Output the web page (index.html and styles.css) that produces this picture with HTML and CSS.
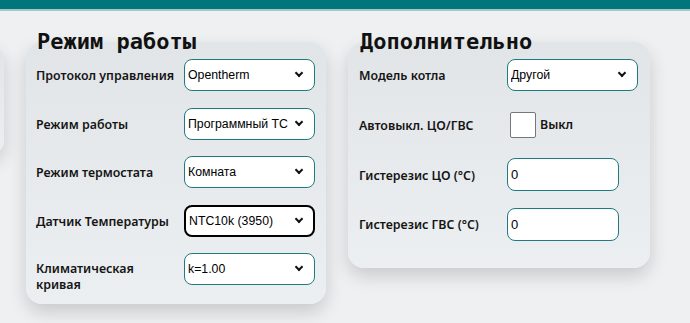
FILE: index.html
```html
<!DOCTYPE html>
<html lang="ru">
<head>
    <meta charset="UTF-8">
    <meta name="viewport" content="width=device-width, initial-scale=1.0">
    <title>Настройки</title>
    <link rel="stylesheet" href="styles.css">
</head>
<body>
    <div class="topbar"></div>

    <div class="columns">
        <!-- колонка слева, почти за краем экрана -->
        <div class="column column-prev">
            <div class="card card-prev"></div>
        </div>

        <div class="column column-main">
            <div class="card">
                <h2 class="card-title">Режим работы</h2>
                <div class="rows">
                    <label class="row-label">Протокол управления</label>
                    <span class="select-wrap">
                        <select>
                            <option>Opentherm</option>
                        </select>
                    </span>

                    <label class="row-label">Режим работы</label>
                    <span class="select-wrap">
                        <select>
                            <option>Программный ТС</option>
                        </select>
                    </span>

                    <label class="row-label">Режим термостата</label>
                    <span class="select-wrap">
                        <select>
                            <option>Комната</option>
                        </select>
                    </span>

                    <label class="row-label">Датчик Температуры</label>
                    <span class="select-wrap">
                        <select class="focused">
                            <option>NTC10k (3950)</option>
                        </select>
                    </span>

                    <label class="row-label two-line">Климатическая<br>кривая</label>
                    <span class="select-wrap">
                        <select>
                            <option>k=1.00</option>
                        </select>
                    </span>
                </div>
            </div>
        </div>

        <div class="column column-extra">
            <div class="card card-extra">
                <h2 class="card-title">Дополнительно</h2>
                <div class="rows">
                    <label class="row-label">Модель котла</label>
                    <span class="select-wrap">
                        <select>
                            <option>Другой</option>
                        </select>
                    </span>

                    <label class="row-label">Автовыкл. ЦО/ГВС</label>
                    <span class="check">
                        <span class="check-box"></span>
                        <span class="check-text">Выкл</span>
                    </span>

                    <label class="row-label">Гистерезис ЦО (°C)</label>
                    <input class="num" type="text" value="0">

                    <label class="row-label">Гистерезис ГВС (°C)</label>
                    <input class="num" type="text" value="0">
                </div>
            </div>
        </div>
    </div>
</body>
</html>
```

FILE: styles.css
```css
body, html {
    margin: 0;
    height: 100%;
    background-color: #eef0f2;
    font-family: "Noto Sans", Arial, sans-serif;
    overflow: hidden;
}

/* Полоса сверху */
.topbar {
    height: 9px;
    background-color: #00767c;
    border-bottom: 2px solid #9fc9cb;
}

.columns {
    display: flex;
    align-items: flex-start;
    gap: 22px;
    margin-left: -96px;
    padding-top: 31px;
}

.column-prev {
    width: 100px;
    padding-top: 4px;
}

.card {
    background: linear-gradient(#e2e5e8, #eceff1);
    border-radius: 16px;
    box-shadow: 0 8px 18px rgba(0, 0, 0, 0.16);
    padding: 17px 11px 19px 10px;
}

.card-prev {
    height: 107px;
    padding: 0;
    border-radius: 12px;
}

.column-main .card {
    width: 279px;
}

.card-extra {
    width: 280px;
    padding-left: 11px;
    padding-bottom: 27px;
}

.card-title {
    font-family: "DejaVu Sans Mono", "Liberation Mono", monospace;
    font-size: 22px;
    font-weight: bold;
    color: #111;
    line-height: 24px;
    margin: -29px 0 5px 1px;
}

.rows {
    display: grid;
    grid-template-columns: 148px 131px;
    row-gap: 16.5px;
    align-items: center;
}

.row-label {
    font-size: 12.4px;
    font-weight: 600;
    color: #151515;
    line-height: 16px;
    padding-top: 2px;
}

/* подпись в две строки чуть ниже центра строки */
.row-label.two-line {
    padding-top: 0;
    margin-top: 8px;
    margin-bottom: -8px;
}

/* Выпадающие списки */
.select-wrap {
    position: relative;
    display: block;
}

.select-wrap::after {
    content: "";
    position: absolute;
    right: 13px;
    top: 11px;
    width: 4px;
    height: 4px;
    border-right: 2.5px solid #111;
    border-bottom: 2.5px solid #111;
    transform: rotate(45deg);
    pointer-events: none;
}

select {
    appearance: none;
    -webkit-appearance: none;
    width: 131px;
    height: 32px;
    box-sizing: border-box;
    border: 1.5px solid #1f7b80;
    border-radius: 8px;
    background-color: #ffffff;
    font-family: "Liberation Sans", Arial, sans-serif;
    font-size: 12.3px;
    color: #000;
    padding: 0 0 0 3px;
    margin: 0;
}

select.focused {
    border: 2px solid #000;
}

/* Чекбокс */
.check {
    display: flex;
    align-items: center;
    gap: 4px;
    height: 34px;
    padding-left: 3px;
}

.check-box {
    width: 24px;
    height: 24px;
    background: #fff;
    border: 1px solid #777;
    border-radius: 2px;
}

.check-text {
    font-size: 12.4px;
    font-weight: 600;
    color: #151515;
}

/* Числовые поля */
.num {
    width: 112px;
    height: 33px;
    box-sizing: border-box;
    border: 1.5px solid #1f7b80;
    border-radius: 8px;
    background: #fff;
    font-family: "Liberation Sans", Arial, sans-serif;
    font-size: 13px;
    color: #000;
    padding: 0 0 0 3px;
    margin: 0;
}
```
